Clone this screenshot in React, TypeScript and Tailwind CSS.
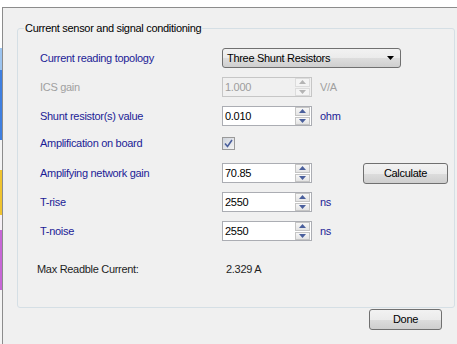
import React from 'react';

const font = { fontFamily: '"Liberation Sans", Arial, sans-serif' };

type Row = {
  label: string;
  kind: 'select' | 'spin' | 'check' | 'text';
  value?: string;
  unit?: string;
  disabled?: boolean;
  button?: string;
  gap: string;
};

const rows: Row[] = [
  { label: 'Current reading topology', kind: 'select', value: 'Three Shunt Resistors', gap: 'mt-[13px]' },
  { label: 'ICS gain', kind: 'spin', value: '1.000', unit: 'V/A', disabled: true, gap: 'mt-[9px]' },
  { label: 'Shunt resistor(s) value', kind: 'spin', value: '0.010', unit: 'ohm', gap: 'mt-[9px]' },
  { label: 'Amplification on board', kind: 'check', gap: 'mt-[7px]' },
  { label: 'Amplifying network gain', kind: 'spin', value: '70.85', button: 'Calculate', gap: 'mt-[10px]' },
  { label: 'T-rise', kind: 'spin', value: '2550', unit: 'ns', gap: 'mt-[9px]' },
  { label: 'T-noise', kind: 'spin', value: '2550', unit: 'ns', gap: 'mt-[9px]' },
];

const Arrow = ({ up, disabled }: { up?: boolean; disabled?: boolean }) => (
  <svg width="7" height="4" viewBox="0 0 7 4">
    <path d={up ? 'M0 4 L3.5 0 L7 4 Z' : 'M0 0 L3.5 4 L7 0 Z'} fill={disabled ? '#b4b4b4' : '#4a5f9c'} />
  </svg>
);

const SpinBox = ({ value, disabled }: { value: string; disabled?: boolean }) => (
  <div
    className={`w-[90px] h-[20px] flex items-center border ${
      disabled ? 'border-[#c6c6c6] bg-[#f0f0f0] text-[#9d9d9d]' : 'border-[#abadb3] bg-white text-black'
    }`}
  >
    <span className="flex-1 pl-[2px] text-[11px] leading-none">{value}</span>
    <div className="w-[15px] h-[18px] mr-[1px] flex flex-col gap-[1px]">
      <div
        className={`flex-1 flex items-center justify-center border ${
          disabled ? 'border-[#dcdcdc] bg-[#f4f4f4]' : 'border-[#c5c5c5] bg-[linear-gradient(#f7f7f7,#e4e4e4)]'
        }`}
      >
        <Arrow up disabled={disabled} />
      </div>
      <div
        className={`flex-1 flex items-center justify-center border ${
          disabled ? 'border-[#dcdcdc] bg-[#f4f4f4]' : 'border-[#c5c5c5] bg-[linear-gradient(#f7f7f7,#e4e4e4)]'
        }`}
      >
        <Arrow disabled={disabled} />
      </div>
    </div>
  </div>
);

const Button = ({ children, className }: { children: React.ReactNode; className: string }) => (
  <div
    className={`h-[21px] flex items-center justify-center rounded-[3px] border border-[#707070] bg-[linear-gradient(#f2f2f2_0%,#ebebeb_50%,#dddddd_51%,#cfcfcf_100%)] text-[11px] text-black ${className}`}
  >
    {children}
  </div>
);

export default function App() {
  return (
    <div className="w-[457px] h-[344px] bg-white flex overflow-hidden tracking-[-0.3px]" style={font}>
      {/* desktop bleeding through at the left edge */}
      <div className="w-[2px] flex flex-col">
        <div className="h-[48px] bg-white" />
        <div className="h-[22px] bg-[#9cc4f0]" />
        <div className="h-[70px] bg-[#3f7fe0]" />
        <div className="h-[30px] bg-[#f4f4f4]" />
        <div className="h-[45px] bg-[#f0c430]" />
        <div className="h-[15px] bg-[#f6f0f6]" />
        <div className="h-[60px] bg-[#c767d6]" />
        <div className="flex-1 bg-[#f4f4f4]" />
      </div>

      <div className="flex-1 mt-[7px] border-l border-t border-[#8c8c8c] bg-[#f0f0f0] flex flex-col">
        <fieldset className="ml-[14px] mr-[2px] mt-[13px] px-0 pb-[28px] border border-[#d5dfe5] rounded-[3px]">
          <legend className="ml-[6px] px-[1px] text-[11px] leading-[14px] text-black">
            Current sensor and signal conditioning
          </legend>

          {rows.map(r => (
            <div key={r.label} className={`h-[20px] flex items-center ${r.gap}`}>
              <span
                className={`w-[204px] pl-[22px] text-[11px] ${
                  r.disabled ? 'text-[#a0a0a0]' : 'text-[#1c1c96]'
                }`}
              >
                {r.label}
              </span>

              {r.kind === 'select' && (
                <div className="w-[179px] h-[20px] flex items-center rounded-[3px] border border-[#707070] bg-[linear-gradient(#f2f2f2_0%,#ebebeb_50%,#dddddd_51%,#cfcfcf_100%)]">
                  <span className="flex-1 pl-[4px] text-[11px] text-black">{r.value}</span>
                  <svg width="7" height="4" viewBox="0 0 7 4" className="mr-[6px]">
                    <path d="M0 0 L3.5 4 L7 0 Z" fill="#000" />
                  </svg>
                </div>
              )}

              {r.kind === 'spin' && <SpinBox value={r.value!} disabled={r.disabled} />}

              {r.kind === 'check' && (
                <div className="w-[13px] h-[13px] border border-[#9a9a9a] bg-[linear-gradient(135deg,#cfd4dc,#f4f4f4)] flex items-center justify-center">
                  <svg width="9" height="9" viewBox="0 0 9 9">
                    <path d="M1 4.5 L3.5 7.5 L8 1" stroke="#4a5f9c" strokeWidth="1.6" fill="none" />
                  </svg>
                </div>
              )}

              {r.unit && (
                <span className={`ml-[8px] text-[11px] ${r.disabled ? 'text-[#a0a0a0]' : 'text-[#1c1c96]'}`}>
                  {r.unit}
                </span>
              )}

              {r.button && <Button className="ml-[51px] w-[85px] h-[20px]">{r.button}</Button>}
            </div>
          ))}

          <div className="h-[20px] mt-[18px] flex items-center text-[11px] text-[#1e1e1e]">
            <span className="w-[204px] pl-[19px]">Max Readble Current:</span>
            <span className="pl-[4px]">2.329 A</span>
          </div>
        </fieldset>

        <div className="flex justify-end pr-[15px] mt-[1px]">
          <Button className="w-[73px]">Done</Button>
        </div>
      </div>
    </div>
  );
}
